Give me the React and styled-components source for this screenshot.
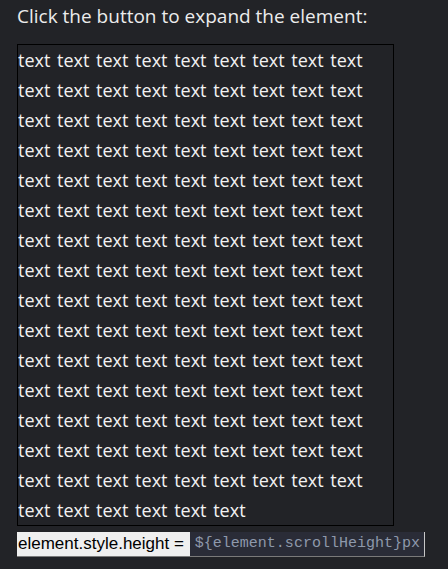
import React from "react"
import styled, { createGlobalStyle } from "styled-components"

const GlobalStyle = createGlobalStyle`
  html, body {
    margin: 0;
    background: #222327;
  }
  body {
    padding: 0 17px;
    font-family: "Open Sans", "Noto Sans", sans-serif;
    color: #ececec;
  }
`

const Heading = styled.p`
  margin: 0;
  padding: 4px 0 0;
  height: 40px;
  font-size: 19px;
  line-height: 24px;
`

const Box = styled.div`
  width: 375px;
  border: 1px solid #000;
  font-size: 18px;
  line-height: 30px;
  color: #f2f2f2;
  word-spacing: 2px;
`

const ExpandButton = styled.button`
  display: inline-flex;
  align-items: stretch;
  margin-top: 6px;
  padding: 0 0 0 1px;
  border: none;
  border-right: 1px solid #c8c8c8;
  border-bottom: 1px solid #7a7a7a;
  background: #efefef;
  color: #000;
  font-family: "Liberation Sans", Arial, sans-serif;
  font-size: 17px;
  line-height: 23px;
  cursor: pointer;
`

const Label = styled.span`
  padding-right: 6px;
`

const Code = styled.code`
  display: inline-block;
  padding: 0 4px 0 5px;
  background: #2a2c37;
  color: #8e99ab;
  font-family: "Liberation Mono", "DejaVu Sans Mono", monospace;
  font-size: 15px;
  line-height: 24px;
`

const words = Array.from({ length: 141 }, () => "text").join(" ")

export default function App() {
  return (
    <>
      <GlobalStyle />
      <Heading>Click the button to expand the element:</Heading>
      <Box>{words}</Box>
      <ExpandButton>
        <Label>element.style.height =</Label>
        <Code>{"${element.scrollHeight}px"}</Code>
      </ExpandButton>
    </>
  )
}
